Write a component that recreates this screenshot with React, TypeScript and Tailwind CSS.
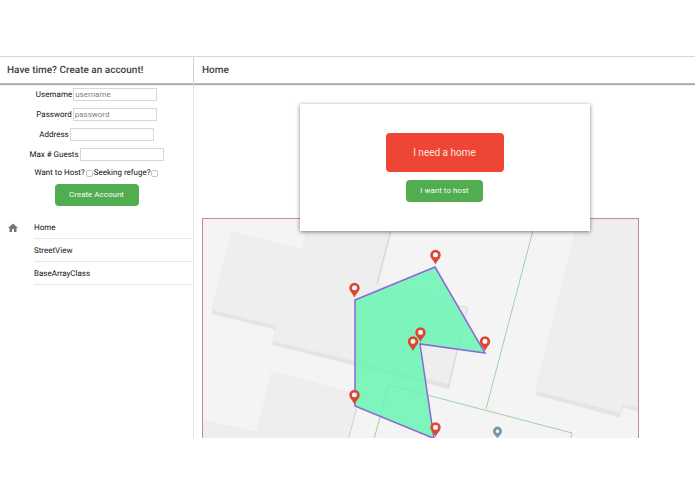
import { MdHome } from 'react-icons/md'

const fields = [
  { id: 'username', label: 'Username', type: 'text', placeholder: 'username' },
  { id: 'password', label: 'Password', type: 'password', placeholder: 'password' },
  { id: 'address', label: 'Address', type: 'text', placeholder: '' },
  { id: 'guests', label: 'Max # Guests', type: 'text', placeholder: '' },
]

const checks = [
  { id: 'host', label: 'Want to Host?' },
  { id: 'refuge', label: 'Seeking refuge?' },
]

const pages = ['Home', 'StreetView', 'BaseArrayClass']

// tip of each pin, in map coordinates
const pins = [
  [354.5, 297.5],
  [435.5, 264.5],
  [485, 351],
  [413, 351],
  [420.5, 342],
  [354.5, 404.5],
  [435.5, 437],
]

function Pin({ x, y }: { x: number; y: number }) {
  return (
    <g transform={`translate(${x} ${y})`}>
      <path
        fill="#de4634"
        fillRule="evenodd"
        d="M0 0C-.9-3.200-5.200-6.200-5.200-9.600a5.200 5.200 0 0 1 10.400 0C5.200-6.200.9-3.200 0 0ZM0-12a2.400 2.400 0 1 0 0 4.800 2.400 2.400 0 0 0 0-4.800Z"
      />
      <circle cy="-9.600" r="2.400" fill="#fff" fillOpacity=".8" />
    </g>
  )
}

function HousingMap() {
  return (
    <svg
      className="block h-[219px] w-full"
      viewBox="203 219 435 219"
      preserveAspectRatio="xMinYMin slice"
      role="img"
      aria-label="Map"
    >
      <rect x="202" y="219" width="700" height="219" fill="#f4f4f4" />

      {/* buildings */}
      <g fill="#e3e4e6">
        <path d="M212 310v4l63 15.500 1-4Z" />
        <path d="M272.500 341v4l176 44 2-5Z" />
        <path d="M535.500 391v4l84 22.500 2-5 2-5 15 4v-4Z" />
      </g>
      <g fill="#eee" stroke="#e7e7e7" strokeWidth=".6">
        <path d="M232 232.500 302 250l8-31h85l-17 65 89 23-18.500 77-176-43 3.500-15-64-16Z" />
        <path d="M272 372 360 395l-17 60H202v-35l55 12.500Z" />
        <path d="M579 219h60v189l-16-4-2.500 9-85-22Z" />
      </g>
      <path d="m458 306 10 2-10 40" fill="none" stroke="#d5d5d8" strokeWidth=".8" />
      <path d="m391 230-14 54M457.500 350l-9 37M356.500 409l-8 30" fill="none" stroke="#c9c9cd" strokeWidth=".8" />

      {/* property lines */}
      <g fill="none" stroke="#98c9a0" strokeWidth=".9">
        <path d="m536 219-50 190" />
        <path d="m374 439 15-54 183 48-1.500 6" />
      </g>

      {/* selected area */}
      <path
        d="m355 300 80-33 50 86-65-9 14 94.500-79-32.500Z"
        fill="#69f5b2"
        fillOpacity=".85"
        stroke="#8d66d9"
        strokeWidth="1.500"
      />
      {pins.map(([x, y]) => (
        <Pin key={`${x}-${y}`} x={x} y={y} />
      ))}

      <path
        fill="#7899a8"
        fillRule="evenodd"
        d="M497.500 438.500c-1-2.500-4.500-3.500-4.500-7.400a4.500 4.500 0 0 1 9 0c0 3.900-3.500 4.900-4.500 7.400Zm0-9.100a1.800 1.800 0 1 0 0 3.600 1.800 1.800 0 0 0 0-3.600Z"
      />
    </svg>
  )
}

export default function App() {
  return (
    <div className="bg-white pt-14 font-[Roboto,sans-serif] text-[8px] leading-3 text-[#111] [text-rendering:geometricPrecision]">
      <div className="flex">
        <aside className="flex w-[194px] shrink-0 flex-col border-r border-[#e4e4e4]">
          <header className="flex h-7 items-center border-t border-b border-t-[#d6d6d6] border-b-[#bdbdbd] pt-0.5 pl-[7px] shadow-[0_1px_1px_#aaa]">
            <h2 className="text-[10px] font-medium text-[#424242]">Have time? Create an account!</h2>
          </header>

          <form className="flex flex-col items-center pt-1" onSubmit={(e) => e.preventDefault()}>
            {fields.map((f) => (
              <div key={f.id} className="mb-[7px] flex items-center gap-px">
                <label htmlFor={f.id}>{f.label}</label>
                <input
                  id={f.id}
                  type={f.type}
                  placeholder={f.placeholder}
                  className="h-[13px] w-[84px] border border-[#d8d8d8] px-px placeholder:text-[#808080]"
                />
              </div>
            ))}
            <div className="-mt-px flex items-center gap-px">
              {checks.map((c) => (
                <div key={c.id} className="flex items-center gap-px">
                  <label htmlFor={c.id}>{c.label}</label>
                  <input
                    id={c.id}
                    type="checkbox"
                    className="size-[7px] appearance-none rounded-[2px] border border-[#c4c4c4] bg-white checked:bg-[#4caf50]"
                  />
                </div>
              ))}
            </div>
            <button type="submit" className="mt-[5px] h-[22px] w-[84px] rounded-[4px] bg-[#52ad50] text-[#f4fff4]">
              Create Account
            </button>
          </form>

          <nav className="mt-[10px]">
            {pages.map((page) => (
              <a key={page} href="#" className="flex h-[23px] items-center">
                <span className="flex w-[34px] shrink-0 pl-[7px]">
                  {page === 'Home' && <MdHome className="size-3 text-[#757575]" />}
                </span>
                <span className="flex h-full flex-1 items-center border-b border-[#e6e6e6] pt-0.5">{page}</span>
              </a>
            ))}
          </nav>
        </aside>

        <main className="min-w-0 flex-1">
          <header className="flex h-7 items-center border-t border-b border-t-[#d6d6d6] border-b-[#bdbdbd] pt-0.5 pl-2 shadow-[0_1px_1px_#aaa]">
            <h1 className="text-[10px] font-medium text-[#424242]">Home</h1>
          </header>

          <div className="px-2 pt-5">
            <section className="relative z-10 mx-auto flex h-[127px] max-w-[290px] flex-col items-center bg-white pt-[29px] shadow-[0_1px_4px_#00000080]">
              <button
                type="button"
                className="h-[39px] w-[118px] rounded-[4px] bg-[#ee4535] text-[10px] text-[#ffe3df]"
              >
                I need a home
              </button>
              <button type="button" className="mt-2 h-[22px] w-[77px] rounded-[4px] bg-[#52ad50] text-[#f4fff4]">
                I want to host
              </button>
            </section>
            <div className="-mt-[13px] w-[90%] border-x border-t border-[#cb8886]">
              <HousingMap />
            </div>
          </div>
        </main>
      </div>
    </div>
  )
}
